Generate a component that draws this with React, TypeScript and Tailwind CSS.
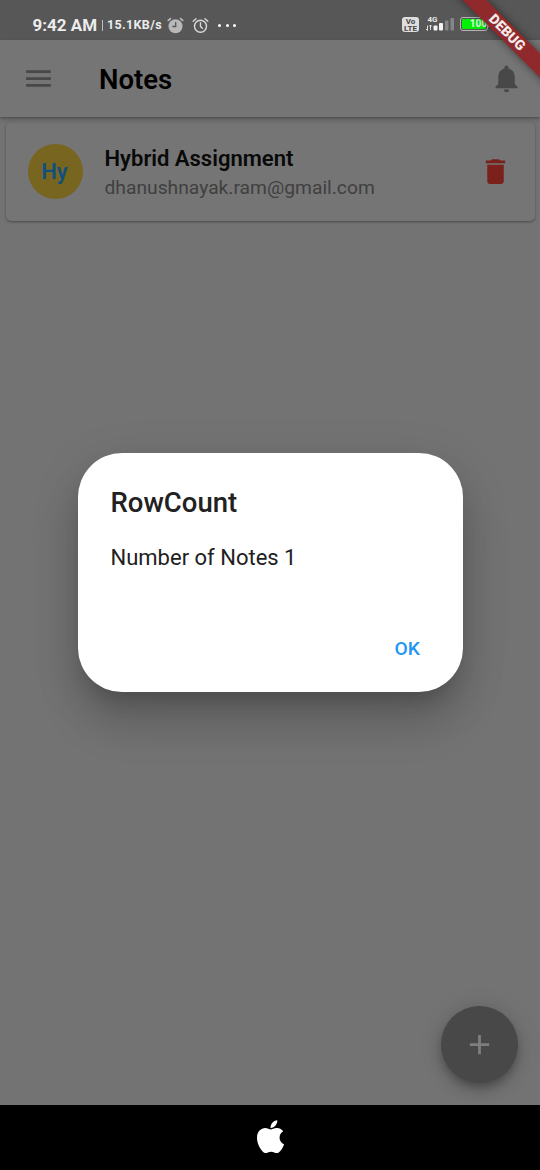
import React from "react";

function AlarmOutline() {
  return (
    <svg className="h-[17px] w-[17px]" viewBox="0 0 17 17" fill="none" stroke="#d8d8d8" strokeWidth="1.4" strokeLinecap="round">
      <circle cx="8.5" cy="9.2" r="6" />
      <path d="M8.5 5.8v3.8l2 1.6M1.2 4.2 4 1.7M15.8 4.2 13 1.7" />
    </svg>
  );
}

function AlarmSolid() {
  return (
    <svg className="h-[17px] w-[17px]" viewBox="0 0 17 17" fill="none" strokeLinecap="round">
      <circle cx="8.5" cy="9.2" r="7" fill="#b8b8b8" />
      <path d="M1.3 3.4 3.4 1.6M15.7 3.4 13.6 1.6" stroke="#b8b8b8" strokeWidth="1.8" />
      <path d="M8.7 5.4v4.1H5.9" stroke="#575757" strokeWidth="1.3" />
    </svg>
  );
}

function StatusBar() {
  return (
    <div className="flex h-10 items-start bg-[#575757] pl-[32.5px] text-[#ececec]">
      <div className="mt-[15px] flex h-5 items-center whitespace-nowrap font-bold">
        <span className="w-[66px] text-[17px] leading-5">9:42 AM</span>
        <span className="ml-[3.5px] h-[11px] w-px bg-[#bbbbbb]" />
        <span className="ml-[4px] w-[56px] text-[12.5px] leading-5 tracking-[0.35px]">15.1KB/s</span>
        <span className="ml-[4px]"><AlarmSolid /></span>
        <span className="ml-2"><AlarmOutline /></span>
        <span className="ml-[9px] flex gap-[4.5px]">
          <i className="h-[3px] w-[3px] rounded-full bg-white" />
          <i className="h-[3px] w-[3px] rounded-full bg-white" />
          <i className="h-[3px] w-[3px] rounded-full bg-white" />
        </span>
      </div>
      <div className="ml-auto mr-[50px] mt-[16px] flex items-start">
        <div className="mt-[1px] flex h-[15px] w-[17px] flex-col items-center justify-center rounded-[3px] bg-[#dedede] text-[8px] font-bold leading-[7px] text-[#444444]">
          <span>Vo</span>
          <span>LTE</span>
        </div>
        <svg className="ml-[7px] h-[16px] w-[29px]" viewBox="0 0 29 16">
          <text x="1.5" y="6" fontSize="8" fontWeight="700" fill="#e8e8e8">4G</text>
          <path d="M1.5 9.5v5M4.5 9v5M0 13l1.5 1.5M3.2 10.5 4.5 9l1.3 1.5" stroke="#dddddd" strokeWidth="1" fill="none" />
          <rect x="7.5" y="9.5" width="4" height="5" rx="1" fill="#f4f4f4" />
          <rect x="13" y="7" width="4" height="7.5" rx="1" fill="#f4f4f4" />
          <rect x="19" y="4.5" width="3.5" height="10" rx="1" fill="#858585" />
          <rect x="24.5" y="2" width="3.5" height="12.5" rx="1" fill="#858585" />
        </svg>
        <div className="ml-[5px] mt-[1px] flex h-[14px] w-[28px] rounded-[3px] border border-[#b5b5b5] p-px">
          <div className="flex flex-1 items-center justify-end rounded-[1px] bg-[#00f000] text-[10px] font-bold leading-[10px] text-[#e8ffe8]">
            <span className="-mr-px">100</span>
          </div>
        </div>
        <span className="mt-[5px] h-[6px] w-[2px] rounded-r bg-[#b5b5b5]" />
      </div>
    </div>
  );
}

function AppBar() {
  return (
    <header className="relative flex h-[77px] items-center bg-[#757575] pl-[22px] pr-[17px] shadow-[0_3px_5px_rgba(0,0,0,0.16),0_1px_2px_rgba(0,0,0,0.22)]">
      <svg className="h-[33px] w-[33px]" viewBox="0 0 24 24" fill="#484848">
        <path d="M3 18h18v-2H3v2zm0-5h18v-2H3v2zm0-7v2h18V6H3z" />
      </svg>
      <h1 className="ml-11 mt-[3px] text-[27.5px] font-semibold leading-8 text-black">Notes</h1>
      <svg className="ml-auto h-[33px] w-[33px]" viewBox="0 0 24 24" fill="#484848">
        <path d="M12 22c1.1 0 2-.9 2-2h-4c0 1.1.89 2 2 2zm6-6v-5c0-3.07-1.64-5.64-4.5-6.32V4c0-.83-.67-1.5-1.5-1.5s-1.5.67-1.5 1.5v.68C7.63 5.36 6 7.92 6 11v5l-2 2v1h16v-1l-2-2z" />
      </svg>
    </header>
  );
}

function NoteCard() {
  return (
    <article className="mx-[5.5px] mt-[5px] flex h-[99px] items-center rounded-[5px] bg-[#757575] pl-[22px] pr-[22.5px] shadow-[0_1px_3px_rgba(0,0,0,0.28),0_1px_1px_rgba(0,0,0,0.1)]">
      <div className="flex h-[55px] w-[55px] items-center justify-center rounded-full bg-[#786520] text-[22px] font-semibold text-[#10507c]">
        <span className="mr-px">Hy</span>
      </div>
      <div className="ml-[22px] mt-[3px]">
        <h2 className="text-[22px] font-semibold leading-[26px] text-[#090909]">Hybrid Assignment</h2>
        <p className="mt-[3px] text-[19.25px] leading-[26px] text-[#404040]">dhanushnayak.ram@gmail.com</p>
      </div>
      <svg className="ml-auto h-[33px] w-[33px]" viewBox="0 0 24 24" fill="#7a211b">
        <path d="M6 19c0 1.1.9 2 2 2h8c1.1 0 2-.9 2-2V7H6v12zM19 4h-3.5l-1-1h-5l-1 1H5v2h14V4z" />
      </svg>
    </article>
  );
}

function Dialog() {
  return (
    <section className="absolute left-[77.5px] top-[453px] flex h-[239px] w-[385px] flex-col rounded-[44px] bg-white px-[33px] shadow-[0_33px_44px_0px_rgba(0,0,0,0.14),0_15px_21px_-10px_rgba(0,0,0,0.2),0_12px_50px_2px_rgba(0,0,0,0.1)]">
      <h2 className="mt-[34px] text-[27.5px] font-medium leading-8 text-[#212121]">RowCount</h2>
      <p className="mt-[26px] text-[22px] leading-[26px] text-[#212121]">Number of Notes 1</p>
      <button className="mr-[9.5px] mt-[66px] self-end text-[19.25px] font-medium leading-6 text-[#2196f3]">OK</button>
    </section>
  );
}

function DebugBanner() {
  return (
    <div className="absolute right-0 top-0 h-[100px] w-[100px] overflow-hidden">
      <div className="absolute left-[-33px] top-[24px] flex h-[17px] w-[200px] rotate-45 items-center justify-center bg-[#90292c] shadow-[0_0_8px_rgba(0,0,0,0.5)]">
        <span className="text-[14px] font-black leading-[17px] text-[#f4eaea]">DEBUG</span>
      </div>
    </div>
  );
}

export default function App() {
  return (
    <div className="relative flex h-[1170px] w-[540px] flex-col overflow-hidden bg-[#737373] font-['Roboto',sans-serif]">
      <StatusBar />
      <AppBar />
      <main className="flex flex-1 flex-col">
        <NoteCard />
        <button className="mb-[22px] ml-auto mr-[22px] mt-auto flex h-[77px] w-[77px] items-center justify-center rounded-full bg-[#484848] shadow-[0_5px_7px_-1px_rgba(0,0,0,0.2),0_8px_14px_rgba(0,0,0,0.14),0_1px_25px_rgba(0,0,0,0.12)]">
          <svg className="h-[33px] w-[33px]" viewBox="0 0 24 24" fill="#7e7e7e">
            <path d="M19 13h-6v6h-2v-6H5v-2h6V5h2v6h6v2z" />
          </svg>
        </button>
      </main>
      <footer className="flex h-[65px] items-start justify-center bg-black pt-[15px]">
        <svg className="h-[33px] w-[27px]" viewBox="4 30 376 449" preserveAspectRatio="none" fill="#ffffff">
          <path d="M318.7 268.7c-.2-36.7 16.4-64.4 50-84.8-18.8-26.9-47.2-41.7-84.7-44.6-35.5-2.8-74.3 20.7-88.5 20.7-15 0-49.4-19.7-76.4-19.7C63.3 141.2 4 184.8 4 273.5q0 39.3 14.4 81.2c12.8 36.7 59 126.7 107.2 125.2 25.2-.6 43-17.9 75.8-17.9 31.8 0 48.3 17.9 76.4 17.9 48.6-.7 90.4-82.5 102.6-119.3-65.2-30.7-61.7-90-61.7-91.9zm-56.6-164.2c27.3-32.4 24.8-61.9 24-72.5-24.1 1.4-52 16.4-67.9 34.9-17.5 19.8-27.8 44.3-25.6 71.9 26.1 2 49.9-11.4 69.500-34.300z" />
        </svg>
      </footer>
      <Dialog />
      <DebugBanner />
    </div>
  );
}
